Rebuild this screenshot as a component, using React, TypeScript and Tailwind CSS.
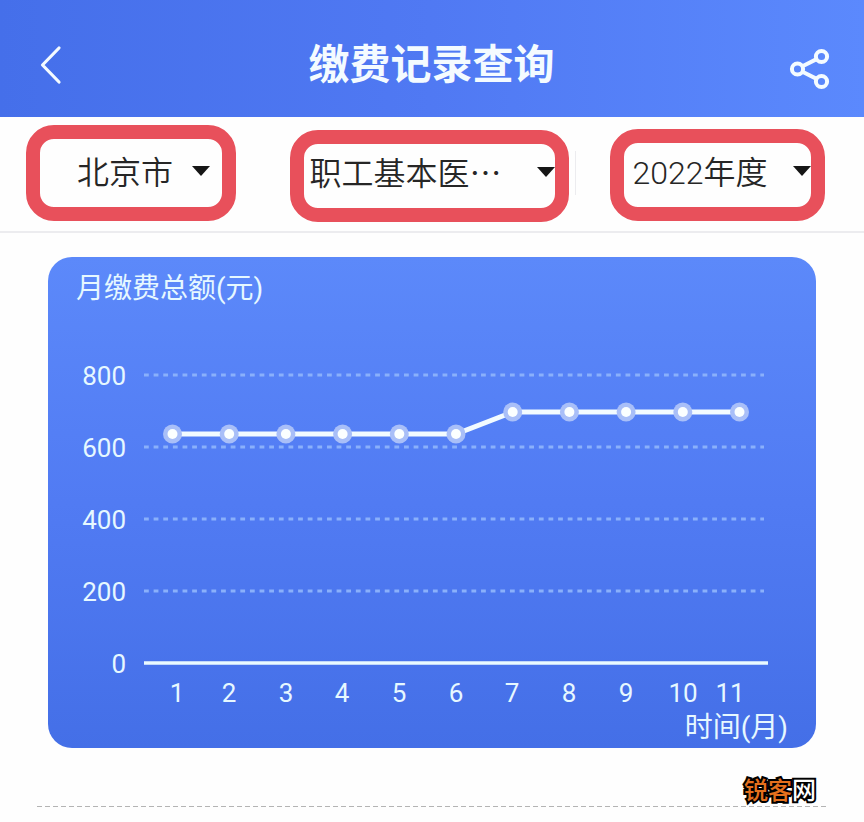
import { useState } from 'react';

interface Filter {
  id: string;
  label: string;
  options: string[];
  cell: string;
  box: string;
  select: string;
  caret: string;
}

interface Payment {
  month: number;
  total: number;
  labelX: number;
}

const filters: Filter[] = [
  {
    id: 'city',
    label: '城市',
    options: ['北京市'],
    cell: 'justify-start pl-[26px] pt-2',
    box: 'w-[210px] h-24',
    select: 'pl-[37px]',
    caret: 'right-3 top-[27px]',
  },
  {
    id: 'type',
    label: '险种',
    options: ['职工基本医⋯'],
    cell: 'justify-center pr-[6px] pt-[13px]',
    box: 'w-[279px] h-[92px]',
    select: 'pl-[6px] pb-1',
    caret: 'right-0 top-[23px]',
  },
  {
    id: 'year',
    label: '年度',
    options: ['2022年度'],
    cell: 'justify-center pr-[6px] pt-3',
    box: 'w-[215px] h-[92px]',
    select: 'pl-[9px] pb-1',
    caret: 'right-0 top-[23px]',
  },
];

const payments: Payment[] = [
  { month: 1, total: 636, labelX: 129 },
  { month: 2, total: 636, labelX: 181 },
  { month: 3, total: 636, labelX: 238 },
  { month: 4, total: 636, labelX: 294 },
  { month: 5, total: 636, labelX: 351 },
  { month: 6, total: 636, labelX: 408 },
  { month: 7, total: 697, labelX: 464 },
  { month: 8, total: 697, labelX: 521 },
  { month: 9, total: 697, labelX: 578 },
  { month: 10, total: 697, labelX: 635 },
  { month: 11, total: 697, labelX: 682 },
];

const ticks = [800, 600, 400, 200, 0];

const toX = (month: number) => 124.5 + (month - 1) * 56.7;
const toY = (value: number) => 354 - value * 0.36;

function Header() {
  return (
    <header className="flex h-[117px] items-center justify-between bg-linear-to-r from-[#456fea] via-[#5079f3] to-[#5b89fd] pl-[38px] pr-[33px] pt-[13px] text-[#f4fbff]">
      <button type="button" aria-label="返回" className="w-9">
        <svg width="26" height="40" viewBox="0 0 26 40" fill="none" stroke="currentColor" strokeWidth="3.2" strokeLinecap="round" strokeLinejoin="round">
          <path d="M21 3 4.5 20 21 37" />
        </svg>
      </button>
      <h1 className="text-[41px] font-bold leading-none">缴费记录查询</h1>
      <button type="button" aria-label="分享" className="pt-2">
        <svg width="42" height="42" viewBox="0 0 42 42" fill="none" stroke="currentColor" strokeWidth="4">
          <circle cx="8.5" cy="21" r="5.6" />
          <circle cx="32.5" cy="8.5" r="5.6" />
          <circle cx="32.5" cy="33.5" r="5.6" />
          <path d="M13.5 18.2 27.6 11.1M13.5 23.8 27.6 30.9" />
        </svg>
      </button>
    </header>
  );
}

function FilterBar() {
  const [values, setValues] = useState<Record<string, string>>({});

  return (
    <div className="grid h-[116px] grid-cols-3 border-b-2 border-[#ececef]">
      {filters.map(f => (
        <div key={f.id} className={`relative flex items-start ${f.cell}`}>
          <div className={`relative rounded-[28px] border-14 border-[#e8505b] ${f.box}`}>
            <select
              id={f.id}
              aria-label={f.label}
              value={values[f.id] ?? f.options[0]}
              onChange={e => setValues({ ...values, [f.id]: e.target.value })}
              className={`h-full w-full appearance-none bg-transparent text-[32px] font-[350] text-[#262626] outline-none ${f.select}`}
            >
              {f.options.map(o => <option key={o}>{o}</option>)}
            </select>
            <svg
              width="18"
              height="10"
              viewBox="0 0 18 10"
              className={`pointer-events-none absolute ${f.caret}`}
            >
              <path d="M0 0h18L9 10z" fill="#161616" />
            </svg>
          </div>
          {f.id === 'type' && <span className="absolute right-0 top-[34px] h-11 w-px bg-[#ececef]" />}
        </div>
      ))}
    </div>
  );
}

function PaymentChart() {
  const line = payments.map(p => `${toX(p.month)},${toY(p.total)}`).join(' ');

  return (
    <section className="mx-12 mt-6 rounded-[24px] bg-linear-to-b from-[#5c89fa] via-[#517bf3] to-[#446fe7] pb-1 pt-3 text-[#e6f8ff]">
      <h2 className="pl-7 text-[28px] font-normal leading-10">月缴费总额(元)</h2>
      <svg viewBox="0 0 768 403" className="block w-full" role="img" aria-label="月缴费总额">
        {ticks.map(t => (
          <g key={t}>
            <text x="78" y={toY(t) + 10} textAnchor="end" fontSize="26" fill="currentColor" className="font-[Roboto]">{t}</text>
            {t === 0 ? (
              <path d="M96 354H720" stroke="#eafaff" strokeWidth="3.5" />
            ) : (
              <path d={`M96 ${toY(t)}H716`} stroke="#8ab0fb" strokeWidth="2.8" strokeDasharray="4.8 4.83" />
            )}
          </g>
        ))}
        <polyline points={line} fill="none" stroke="#f2fbff" strokeWidth="5" />
        {payments.map(p => (
          <g key={p.month}>
            <circle cx={toX(p.month)} cy={toY(p.total)} r="9.5" fill="#a9bff8" />
            <circle cx={toX(p.month)} cy={toY(p.total)} r="5" fill="#fbffff" />
            <text x={p.labelX} y="393" textAnchor="middle" fontSize="26" fill="currentColor" className="font-[Roboto]">{p.month}</text>
          </g>
        ))}
      </svg>
      <p className="pr-7 text-right text-[28px] leading-8">时间(月)</p>
    </section>
  );
}

export default function App() {
  return (
    <div className="min-h-screen bg-[#fefefe] font-[Roboto,'Noto_Sans_CJK_SC',sans-serif]">
      <Header />
      <FilterBar />
      <PaymentChart />
      <footer className="ml-[37px] mr-9 pt-7">
        <p className="pr-3 text-right text-[24px] font-medium leading-[30px] text-white [-webkit-text-stroke:4px_#000] [paint-order:stroke]">
          <span className="text-[#e5701d]">锐客</span>网
        </p>
        <hr className="h-px border-0 bg-[repeating-linear-gradient(90deg,#b4b4b4_0_5px,transparent_5px_8px)]" />
      </footer>
    </div>
  );
}
